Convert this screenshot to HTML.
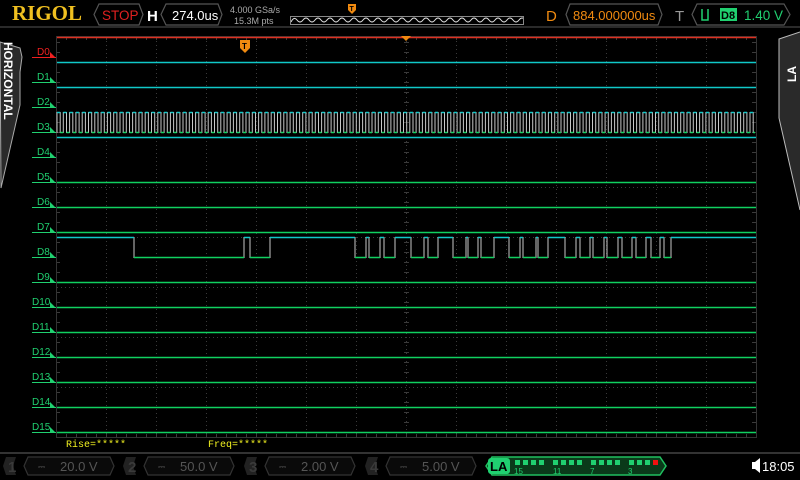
<!DOCTYPE html>
<html><head><meta charset="utf-8"><style>
*{margin:0;padding:0;box-sizing:border-box}
body{width:800px;height:480px;background:#000;overflow:hidden;position:relative;font-family:"Liberation Sans",sans-serif}
svg{position:absolute;left:0;top:0}
</style></head><body>
<svg width="800" height="480" id="s" xmlns="http://www.w3.org/2000/svg">
<defs><clipPath id="mc"><rect x="291" y="16" width="232" height="9"/></clipPath></defs>
<rect x="0" y="0" width="800" height="28" fill="#000"/>
<line x1="0" y1="27" x2="800" y2="27" stroke="#2a2a2a" stroke-width="2"/>
<text x="12" y="20" font-family="Liberation Serif" font-weight="bold" font-size="21" fill="#f0c020">RIGOL</text>
<path d="M99,4 H139 L143,14.5 L139,25 H99 L94,14.5 Z" fill="none" stroke="#555" stroke-width="1.2"/>
<text x="102" y="20" font-size="13.5" fill="#e02020">STOP</text>
<text x="147" y="21" font-size="15" font-weight="bold" fill="#fff">H</text>
<path d="M166,4 H218 L222,14.5 L218,25 H166 L161,14.5 Z" fill="none" stroke="#555" stroke-width="1.2"/>
<text x="172" y="20" font-size="13" fill="#fff">274.0us</text>
<text x="230" y="13" font-size="9" fill="#aaa">4.000 GSa/s</text>
<text x="234" y="24" font-size="9" fill="#aaa">15.3M pts</text>
<rect x="290.5" y="16.5" width="233" height="8" fill="none" stroke="#888"/>
<path id="mini" fill="none" stroke="#ddd" stroke-width="1" clip-path="url(#mc)"/>
<path d="M348,4 h8 v6 l-4,4 l-4,-4z" fill="#f08a10"/>
<text x="349.5" y="11" font-size="7" font-weight="bold" fill="#000">T</text>
<text x="546" y="21" font-size="15" fill="#f08a10">D</text>
<path d="M570,4 H658 L662,14.5 L658,25 H570 L566,14.5 Z" fill="none" stroke="#555" stroke-width="1.2"/>
<text x="573" y="20" font-size="13" fill="#f08a10">884.000000us</text>
<text x="675" y="21" font-size="15" fill="#999">T</text>
<path d="M697,4 H784 L790,14.5 L784,25 H697 L692,14.5 Z" fill="none" stroke="#555" stroke-width="1.2"/>
<path d="M702,9 v11 h6 v-11" fill="none" stroke="#20d070" stroke-width="1.5"/>
<rect x="720" y="8" width="17" height="13" fill="#20d070"/>
<text x="721" y="19" font-size="11" font-weight="bold" fill="#000">D8</text>
<text x="744" y="20" font-size="13.5" fill="#20d070">1.40 V</text>

<path d="M0,42 L20,48 L22,57 L20,72 V105 L1,188 Z" fill="#2a2a2a" stroke="#aaa" stroke-width="1"/>
<text font-size="12" font-weight="bold" fill="#fff" transform="translate(4,42) rotate(90)">HORIZONTAL</text>
<path d="M800,32 L779,39 V118 L800,210" fill="#2a2a2a" stroke="#bbb" stroke-width="1"/>
<text font-size="12" font-weight="bold" fill="#fff" transform="translate(796,82) rotate(-90)">LA</text>

<g id="grid"></g>
<rect x="56.5" y="36.5" width="700" height="401" fill="none" stroke="#333"/>
<g id="tr"></g>
<path d="M401,36 h10 l-5,5z" fill="#f08a10"/>
<path d="M240,40 h10 v8 l-5,5 l-5,-5z" fill="#f08a10"/>
<text x="242" y="49" font-size="8" font-weight="bold" fill="#000">T</text>
<g id="lab"></g>

<text x="66" y="447" font-family="Liberation Mono" font-size="10" fill="#f0f020">Rise=*****</text>
<text x="208" y="447" font-family="Liberation Mono" font-size="10" fill="#f0f020">Freq=*****</text>

<line x1="0" y1="453" x2="800" y2="453" stroke="#333" stroke-width="2"/>
<g id="bot"></g>
<path d="M492,457 H660 L666,466 L660,475 H492 L486,466 Z" fill="#0a3a1a" stroke="#20c060" stroke-width="1.5"/>
<rect x="488" y="458" width="22" height="16" rx="3" fill="#20d070"/>
<text x="490" y="471" font-size="13" font-weight="bold" fill="#000">LA</text>
<g id="sq"></g>
<text x="514" y="474" font-size="8" fill="#20d070">15</text>
<text x="553" y="474" font-size="8" fill="#20d070">11</text>
<text x="590" y="474" font-size="8" fill="#20d070">7</text>
<text x="628" y="474" font-size="8" fill="#20d070">3</text>
<path d="M752,462 h3 l5,-4 v15 l-5,-4 h-3z" fill="#fff"/>
<text x="762" y="471" font-size="13" fill="#fff">18:05</text>
</svg>
<script>
var NS="http://www.w3.org/2000/svg";
function el(p,t,a){var e=document.createElementNS(NS,t);for(var k in a)e.setAttribute(k,a[k]);document.getElementById(p).appendChild(e);return e;}
var d="M291,22";for(var x=291;x<523;x+=12){d+=" Q"+(x+3)+",16 "+(x+6)+",20 Q"+(x+9)+",24 "+(x+12)+",20";}
document.getElementById("mini").setAttribute("d",d);
for(var i=1;i<14;i++){var X=56.5+50*i;el("grid","line",{x1:X,y1:37,x2:X,y2:437,stroke:"#3a3a3a","stroke-dasharray":"1,3"});}
for(var j=1;j<8;j++){var Y=37.5+50*j;el("grid","line",{x1:57,y1:Y,x2:756,y2:Y,stroke:"#3a3a3a","stroke-dasharray":"1,3"});}
for(var y=42;y<437;y+=10){el("grid","line",{x1:56,y1:y+.5,x2:60,y2:y+.5,stroke:"#3a3a3a"});el("grid","line",{x1:752,y1:y+.5,x2:756,y2:y+.5,stroke:"#3a3a3a"});el("grid","line",{x1:404,y1:y+.5,x2:409,y2:y+.5,stroke:"#3a3a3a"});}
for(var x=66;x<756;x+=10){el("grid","line",{x1:x+.5,y1:37,x2:x+.5,y2:40,stroke:"#3a3a3a"});el("grid","line",{x1:x+.5,y1:434,x2:x+.5,y2:437,stroke:"#3a3a3a"});}
var C="#10c8c8",G="#10d060",W="#c8c8c8";
el("tr","line",{x1:57,y1:37.5,x2:756,y2:37.5,stroke:"#e03020","stroke-width":1.5});
[62,87,137].forEach(function(y){el("tr","line",{x1:57,y1:y+.5,x2:756,y2:y+.5,stroke:C,"stroke-width":1.5});});
[182,207,232,282,307,332,357,382,407,432].forEach(function(y){el("tr","line",{x1:57,y1:y+.5,x2:756,y2:y+.5,stroke:G,"stroke-width":1.5});});
var hi="",lo="",ed="";
for(var x=57;x<754;x+=6.3){var a=x,b=x+3.2,c=x+6.3;hi+="M"+a+",112.5H"+b;lo+="M"+b+",132.5H"+Math.min(c,755);ed+="M"+a+",112V133M"+b+",112V133";}
el("tr","path",{d:ed,stroke:W,"stroke-width":1,fill:"none"});
el("tr","path",{d:hi,stroke:C,"stroke-width":1.5,fill:"none"});
el("tr","path",{d:lo,stroke:G,"stroke-width":1.5,fill:"none"});
var lows=[[134,244],[250,270],[355,366],[369,380],[384,395],[411,424],[428,438],[453,466],[468,478],[481,494],[509,520],[523,536],[538,548],[565,576],[580,590],[593,604],[607,618],[622,632],[636,646],[651,660],[664,671]];
var h="",l="",e="",p=57;
lows.forEach(function(q){h+="M"+p+",237.5H"+q[0];l+="M"+q[0]+",257.5H"+q[1];e+="M"+q[0]+",237V258M"+q[1]+",237V258";p=q[1];});
h+="M"+p+",237.5H756";
el("tr","path",{d:e,stroke:W,"stroke-width":1,fill:"none"});
el("tr","path",{d:h,stroke:C,"stroke-width":1.5,fill:"none"});
el("tr","path",{d:l,stroke:G,"stroke-width":1.5,fill:"none"});
for(var n=0;n<16;n++){var y=57+25*n,col=n==0?"#f02020":"#20d070";
el("lab","line",{x1:32,y1:y+.5,x2:56,y2:y+.5,stroke:col,"stroke-width":1});
el("lab","path",{d:"M50,"+(y-5)+"L55,"+y+"H50Z",fill:col});
var t=el("lab","text",{x:n<10?37:32,y:y-2,"font-size":"10",fill:col});t.textContent="D"+n;}
var xs=[2,122,243,364];var vals=["20.0 V","50.0 V","2.00 V","5.00 V"];
for(var k=0;k<4;k++){var x0=xs[k];
el("bot","path",{d:"M"+(x0+4)+",457h10l-3,9l3,9h-10l-3,-9z",fill:"#222"});
var t=el("bot","text",{x:x0+6,y:472,"font-size":"15","font-weight":"bold",fill:"#3a3a3a"});t.textContent=k+1;
el("bot","path",{d:"M"+(x0+26)+",457h82l4,9l-4,9h-82l-4,-9z",fill:"#0a0a0a",stroke:"#333","stroke-width":1.2});
var t2=el("bot","text",{x:x0+36,y:470,"font-size":"9",fill:"#555"});t2.textContent="⎓";
var t3=el("bot","text",{x:x0+58,y:471,"font-size":"13",fill:"#555"});t3.textContent=vals[k];}
for(var g=0;g<4;g++){for(var m=0;m<4;m++){var X=515+g*38+m*8;el("sq","rect",{x:X,y:460,width:5,height:5,fill:(g==3&&m==3)?"#f01010":"#20d070"});}}
</script>
</body></html>
